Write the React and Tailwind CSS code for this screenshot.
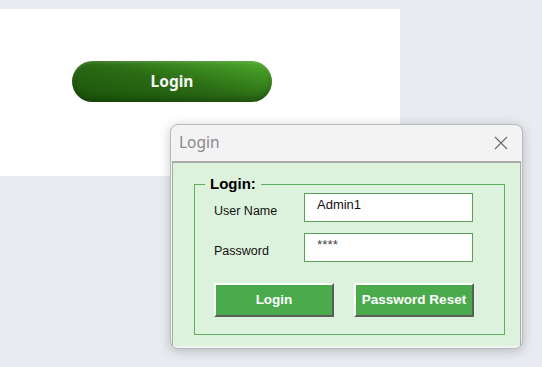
import { useState } from 'react'

export default function App() {
  const [user, setUser] = useState('Admin1')
  const [pass, setPass] = useState('****')

  return (
    <div className="relative h-screen w-full overflow-hidden bg-[#e8ecf0]">
      {/* Page behind the dialog */}
      <div className="pt-[9px]">
        <div className="h-[167px] w-[400px] bg-white pl-[72px] pt-[52px]">
          <button className="flex h-[41px] w-[200px] items-center justify-center rounded-full bg-linear-to-tr from-[#1a520a] via-[#2a6b14] to-[#4fae2d] font-['Noto_Sans',sans-serif] text-[15.5px] font-bold text-[#f4f4f4] shadow-[inset_0_-3px_6px_rgba(0,0,0,0.25),inset_0_2px_3px_rgba(255,255,255,0.15)]">
            Login
          </button>
        </div>
      </div>

      {/* Login dialog window */}
      <div className="absolute left-[170px] top-[124px] flex h-[225px] w-[353px] flex-col overflow-hidden rounded-lg border border-[#b9b9b9] bg-[#f3f3f3] shadow-[0_2px_12px_rgba(0,0,0,0.22)]">
        <div className="flex h-[36px] items-center justify-between pl-[8px] pr-[14px]">
          <span className="font-['Noto_Sans',sans-serif] text-[15.5px] text-[#8a8a8a]">Login</span>
          <svg width="14" height="14" viewBox="0 0 14 14" className="text-[#6a6a6a]">
            <path d="M1 1 L13 13 M13 1 L1 13" stroke="currentColor" strokeWidth="1.1" fill="none" />
          </svg>
        </div>

        <div className="mx-[1px] mb-[2px] flex-1 border-x border-t-2 border-[#a9a9a9] bg-[#ddf2dd] pl-[21px] pt-[12px] font-['Liberation_Sans',Arial,sans-serif]">
          <fieldset className="w-[311px] border border-[#5fae5f]">
            <legend className="ml-[10px] px-[5px] text-[15px] font-bold leading-[18px] text-black">Login:</legend>
            <div className="flex flex-col gap-[11px] pb-[17px] pl-[19px]">
              <div className="flex items-start">
                <label className="w-[90px] pt-[11px] text-[12.5px] leading-[14px] text-[#111]">User Name</label>
                <input
                  value={user}
                  onChange={(e) => setUser(e.target.value)}
                  className="h-[29px] w-[169px] border border-[#5a9f5a] bg-white pb-[7px] pl-[12px] text-[13px] text-[#111] outline-none"
                />
              </div>
              <div className="flex items-start">
                <label className="w-[90px] pt-[11px] text-[12.5px] leading-[14px] text-[#111]">Password</label>
                <input
                  value={pass}
                  onChange={(e) => setPass(e.target.value)}
                  className="h-[29px] w-[169px] border border-[#5a9f5a] bg-white pb-[7px] pl-[12px] text-[13.5px] text-[#444] outline-none"
                />
              </div>
              <div className="mt-[10px] flex gap-[20px]">
                <button className="h-[34px] w-[120px] border-2 border-b-[#5c5c5c] border-l-white border-r-[#5c5c5c] border-t-white bg-[#4aab4d] text-[13.5px] font-bold text-white">
                  Login
                </button>
                <button className="h-[34px] w-[120px] border-2 border-b-[#5c5c5c] border-l-white border-r-[#5c5c5c] border-t-white bg-[#4aab4d] text-[13.5px] font-bold text-white">
                  Password Reset
                </button>
              </div>
            </div>
          </fieldset>
        </div>
      </div>
    </div>
  )
}
